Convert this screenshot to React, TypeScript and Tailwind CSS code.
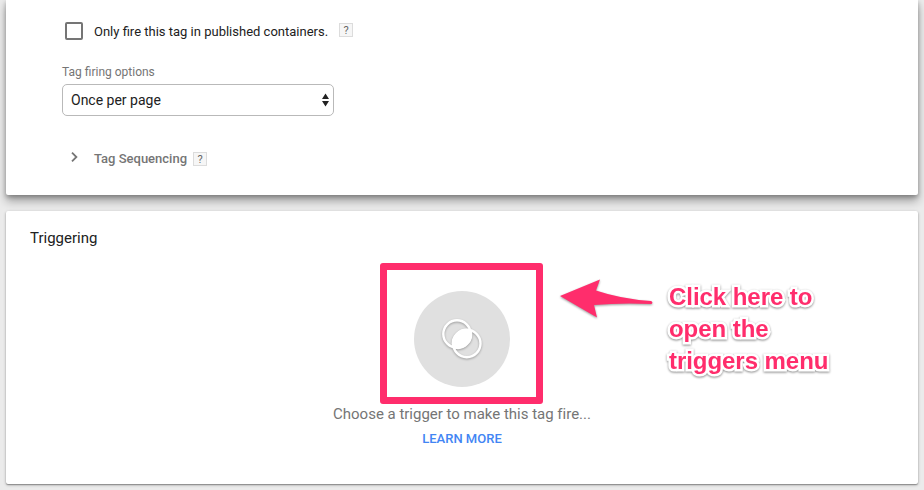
import React from "react";

function Help({ className }: { className: string }) {
  return (
    <span
      className={`flex h-[14px] w-[14px] items-center justify-center border border-[#dcdcdc] bg-[#f6f6f6] text-[11px] leading-none text-[#666] ${className}`}
    >
      ?
    </span>
  );
}

function TriggerIcon() {
  return (
    <svg
      width="48"
      height="48"
      viewBox="0 0 48 48"
      fill="none"
      className="drop-shadow-[0_1px_1px_rgba(0,0,0,0.3)]"
    >
      <circle cx="19" cy="19" r="13.7" stroke="#fff" strokeWidth="2.4" />
      <circle cx="28.8" cy="28.5" r="13.7" stroke="#fff" strokeWidth="2.4" />
      <path
        d="M33.4 14.7A14.6 14.6 0 0 0 14.5 33.1A14.6 14.6 0 0 0 33.4 14.7Z"
        fill="#fff"
      />
    </svg>
  );
}

export default function App() {
  return (
    <div className="h-[490px] w-[924px] overflow-hidden bg-[#ebebeb] px-[6px] font-[Roboto,'Liberation_Sans',sans-serif]">
      <section className="h-[195px] rounded-b-[2px] bg-white px-14 pt-[21px] shadow-[0_6px_10px_rgba(0,0,0,0.32),0_2px_4px_rgba(0,0,0,0.25)]">
        <div className="flex h-5 items-center pl-[3px]">
          <span className="h-[18px] w-[18px] rounded-[2px] border-2 border-[#757575]" />
          <span className="ml-[11px] w-[234px] whitespace-nowrap pt-[2px] text-[13px] text-[#212121]">
            Only fire this tag in published containers.
          </span>
          <Help className="ml-[11px] -mt-[2px]" />
        </div>
        <div className="mt-[23px] h-4 text-xs leading-4 text-[#757575]">
          Tag firing options
        </div>
        <div className="mt-1 flex h-8 w-[272px] items-center justify-between rounded-[5px] border border-[#b9b9b9] pl-2 pr-1 text-sm text-[#212121]">
          <span>Once per page</span>
          <svg width="7" height="14" viewBox="0 0 7 14" fill="#222">
            <path d="M3.5 0.6L7 6H0ZM3.5 13.4L0 8H7Z" />
          </svg>
        </div>
        <div className="mt-[33px] flex h-5 items-center pl-[9px]">
          <svg width="7" height="12" viewBox="0 0 7 12" fill="none" className="-mt-[4px]">
            <path d="M1 1.6L5.4 6L1 10.4" stroke="#757575" strokeWidth="1.8" />
          </svg>
          <span className="ml-4 w-[93px] whitespace-nowrap text-[13px] font-medium text-[#757575]">
            Tag Sequencing
          </span>
          <Help className="ml-[6px]" />
        </div>
      </section>

      <section className="mt-4 h-[273px] rounded-[2px] bg-white px-6 pt-[17px] shadow-[0_1px_3px_rgba(0,0,0,0.3),0_1px_1px_rgba(0,0,0,0.25)]">
        <h2 className="h-5 text-[15px] leading-5 text-[#212121]">Triggering</h2>
        <div className="mt-[15px] grid grid-cols-[350px_162.5px_1fr]">
          <div />
          <div className="flex h-[141px] items-center justify-center rounded-[3px] border-[7px] border-[#ff2d6c] pt-[11px]">
            <div className="ml-[1.5px] flex h-24 w-24 shrink-0 items-center justify-center rounded-full bg-[#e0e0e0]">
              <TriggerIcon />
            </div>
          </div>
          <div className="flex pl-[16.5px] pt-[13px]">
            <svg
              width="96"
              height="46"
              viewBox="0 0 96 46"
              fill="#ff2d6c"
              className="shrink-0 drop-shadow-[0_1px_1px_rgba(0,0,0,0.4)]"
            >
              <path d="M1 20L41 3.5L37 14.5Q62 23 92 25Q94.5 26.3 92.5 28Q62 26.5 35 29L38 41.5Z" />
            </svg>
            <p className="ml-[14px] mt-[5px] whitespace-nowrap font-['Liberation_Sans',sans-serif] text-[24px] font-bold leading-8 tracking-[-0.05px] text-[#ff2d6c] [-webkit-text-stroke:5px_white] [paint-order:stroke_fill] drop-shadow-[0_1px_1px_rgba(0,0,0,0.45)]">
              Click here to
              <br />
              open the
              <br />
              triggers menu
            </p>
          </div>
        </div>
        <p className="text-center text-[15px] leading-5 tracking-[-0.01px] text-[#757575]">
          Choose a trigger to make this tag fire...
        </p>
        <p className="mt-[5px] text-center text-[13px] font-medium leading-5 text-[#4285f4]">
          LEARN MORE
        </p>
      </section>
    </div>
  );
}
